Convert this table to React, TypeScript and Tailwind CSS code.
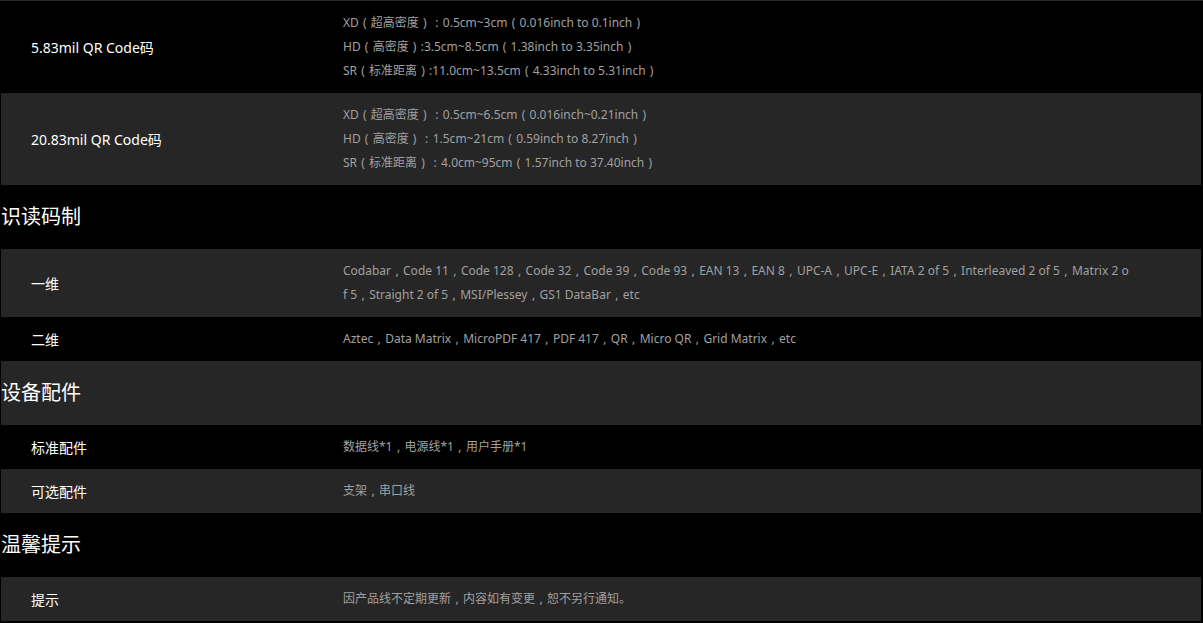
type Row =
  | { kind: "head"; title: string }
  | { kind: "item"; label: string; lines: string[] };

const ROWS: Row[] = [
  {
    kind: "item",
    label: "5.83mil QR Code码",
    lines: [
      "XD（超高密度）：0.5cm~3cm（0.016inch to 0.1inch）",
      "HD（高密度）:3.5cm~8.5cm（1.38inch to 3.35inch）",
      "SR（标准距离）:11.0cm~13.5cm（4.33inch to 5.31inch）",
    ],
  },
  {
    kind: "item",
    label: "20.83mil QR Code码",
    lines: [
      "XD（超高密度）：0.5cm~6.5cm（0.016inch~0.21inch）",
      "HD（高密度）：1.5cm~21cm（0.59inch to 8.27inch）",
      "SR（标准距离）：4.0cm~95cm（1.57inch to 37.40inch）",
    ],
  },
  { kind: "head", title: "识读码制" },
  {
    kind: "item",
    label: "一维",
    lines: [
      "Codabar，Code 11，Code 128，Code 32，Code 39，Code 93，EAN 13，EAN 8，UPC-A，UPC-E，IATA 2 of 5，Interleaved 2 of 5，Matrix 2 of 5，Straight 2 of 5，MSI/Plessey，GS1 DataBar，etc",
    ],
  },
  {
    kind: "item",
    label: "二维",
    lines: ["Aztec，Data Matrix，MicroPDF 417，PDF 417，QR，Micro QR，Grid Matrix，etc"],
  },
  { kind: "head", title: "设备配件" },
  { kind: "item", label: "标准配件", lines: ["数据线*1，电源线*1，用户手册*1"] },
  { kind: "item", label: "可选配件", lines: ["支架，串口线"] },
  { kind: "head", title: "温馨提示" },
  { kind: "item", label: "提示", lines: ["因产品线不定期更新，内容如有变更，恕不另行通知。"] },
];

const HALF: Record<string, string> = { "，": ",", "（": "(", "）": ")", "：": ":" };

// full-width punctuation is drawn centred in a 12px box, as the screenshot shows it
function Punct({ text }: { text: string }) {
  const parts = text.split(/([，（）：])/);
  return (
    <>
      {parts.map((p, i) =>
        HALF[p] ? (
          <span key={i} className="inline-block w-3 text-center">
            {HALF[p]}
          </span>
        ) : (
          p
        )
      )}
    </>
  );
}

export default function App() {
  return (
    <div
      className="min-h-screen bg-black"
      style={{ fontFamily: '"Noto Sans", "Noto Sans CJK SC", sans-serif' }}
    >
      <div className="h-px w-full bg-[#262626]" />
      <div className="ml-px w-[1200px]">
        {ROWS.map((r, i) => {
          const bg = i % 2 === 1 ? "bg-[#262626]" : "bg-black";
          if (r.kind === "head") {
            return (
              <div key={r.title} className={`flex h-16 items-center ${bg}`}>
                <h3 className="text-[20px] leading-none text-white">{r.title}</h3>
              </div>
            );
          }
          return (
            <div key={r.label} className={`flex items-center py-[10px] ${bg}`}>
              <div className="w-[342px] shrink-0 pl-[30px] text-[14px] text-white">{r.label}</div>
              <div className="min-w-0 flex-1 break-all pr-[71px] text-[12px] leading-6 text-[#a0a0a0]">
                {r.lines.map((l) => (
                  <p key={l}>
                    <Punct text={l} />
                  </p>
                ))}
              </div>
            </div>
          );
        })}
      </div>
    </div>
  );
}
